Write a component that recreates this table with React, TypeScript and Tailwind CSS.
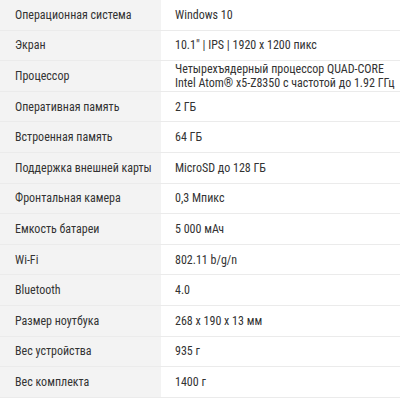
import React from 'react';

const specs: { label: string; value: React.ReactNode }[] = [
  { label: 'Операционная система', value: 'Windows 10' },
  { label: 'Экран', value: '10.1" | IPS | 1920 x 1200 пикс' },
  {
    label: 'Процессор',
    value: (
      <>
        Четырехъядерный процессор QUAD-CORE
        <br />
        Intel Atom® x5-Z8350 с частотой до 1.92 ГГц
      </>
    ),
  },
  { label: 'Оперативная память', value: '2 ГБ' },
  { label: 'Встроенная память', value: '64 ГБ' },
  { label: 'Поддержка внешней карты', value: 'MicroSD до 128 ГБ' },
  { label: 'Фронтальная камера', value: '0,3 Мпикс' },
  { label: 'Емкость батареи', value: '5 000 мАч' },
  { label: 'Wi-Fi', value: '802.11 b/g/n' },
  { label: 'Bluetooth', value: '4.0' },
  { label: 'Размер ноутбука', value: '268 x 190 x 13 мм' },
  { label: 'Вес устройства', value: '935 г' },
  { label: 'Вес комплекта', value: '1400 г' },
];

export default function App() {
  return (
    <div
      className="w-[400px] h-[400px] overflow-hidden bg-white text-[#333] text-[12px]"
      style={{ fontFamily: '"Liberation Sans Narrow", "Roboto Condensed", "DejaVu Sans Condensed", sans-serif' }}
    >
      {specs.map((s) => (
        <div key={s.label} className="flex h-[30.6px] overflow-hidden border-b border-[#ebebeb] leading-[14px]">
          <div className="w-[161px] shrink-0 bg-[#f3f3f3] pl-[15px] flex items-center whitespace-nowrap">{s.label}</div>
          <div className="flex-1 pl-[14px] flex items-center whitespace-nowrap">{s.value}</div>
        </div>
      ))}
    </div>
  );
}
